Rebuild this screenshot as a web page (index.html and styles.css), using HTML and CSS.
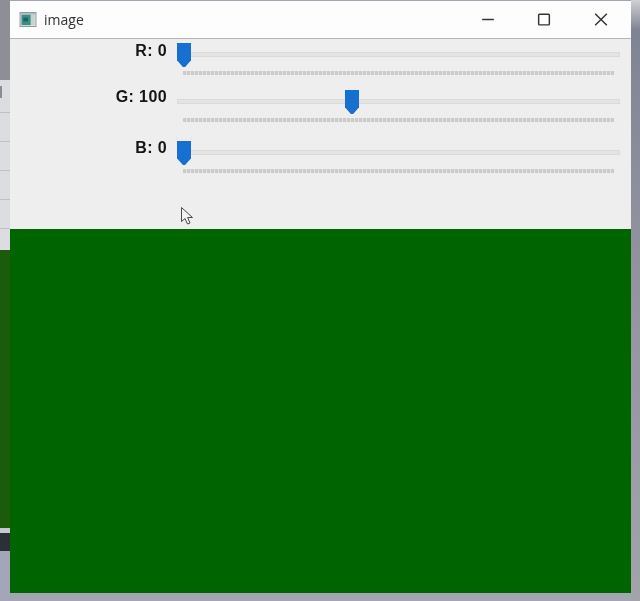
FILE: index.html
```html
<!DOCTYPE html>
<html lang="en">
<head>
<meta charset="utf-8">
<title>image</title>
<link rel="stylesheet" href="styles.css">
</head>
<body>
<div class="desktop">
  <div class="behind">
    <div class="b-top"></div>
    <div class="b-panel">
      <div class="b-mark"></div>
      <div class="b-line"></div>
      <div class="b-line"></div>
      <div class="b-line"></div>
      <div class="b-line"></div>
      <div class="b-line"></div>
    </div>
    <div class="b-green"></div>
    <div class="b-light"></div>
    <div class="b-dark"></div>
    <div class="b-bottom"></div>
  </div>
  <main class="window">
    <header class="titlebar">
      <svg class="app-icon" viewBox="0 0 18 16" aria-hidden="true">
        <rect x="0.5" y="0.5" width="17" height="15" fill="#dfe6e4" stroke="#8a9499"/>
        <rect x="1" y="1" width="16" height="2" fill="#aebcc6"/>
        <rect x="2" y="3" width="10" height="11" fill="#3a9080"/>
        <rect x="4" y="6" width="5" height="4" fill="#1f5f70"/>
        <rect x="12" y="3" width="4" height="11" fill="#c6d2cc"/>
      </svg>
      <span class="title">image</span>
      <div class="controls">
        <svg class="ctl" viewBox="0 0 56 38" aria-hidden="true"><path d="M22 19H34" /></svg>
        <svg class="ctl" viewBox="0 0 56 38" aria-hidden="true"><rect x="22.5" y="13.5" width="11" height="11" rx="1"/></svg>
        <svg class="ctl ctl-close" viewBox="0 0 56 38" aria-hidden="true"><path d="M22 13L34 25M34 13L22 25"/></svg>
      </div>
    </header>
    <section class="panel">
      <div class="row">
        <label class="label">R: 0</label>
        <div class="slider">
          <div class="track"></div>
          <div class="ticks"></div>
          <div class="thumb thumb-min"></div>
        </div>
      </div>
      <div class="row row-g">
        <label class="label">G: 100</label>
        <div class="slider">
          <div class="track"></div>
          <div class="ticks"></div>
          <div class="thumb thumb-g"></div>
        </div>
      </div>
      <div class="row row-b">
        <label class="label">B: 0</label>
        <div class="slider">
          <div class="track"></div>
          <div class="ticks"></div>
          <div class="thumb thumb-min"></div>
        </div>
      </div>
      <svg class="cursor" viewBox="0 0 14 20" aria-hidden="true">
        <path d="M1.5 1.5V15.5L5 12.5L7.5 18L10 17L7.6 11.5H12.5Z" fill="#f4f4f4" stroke="#4a4a4a" stroke-width="1"/>
      </svg>
    </section>
    <section class="canvas"></section>
  </main>
  <div class="right-edge"></div>
</div>
</body>
</html>
```
FILE: styles.css
```css
* { box-sizing: border-box; }
html, body { margin: 0; padding: 0; }
body { width: 640px; height: 601px; overflow: hidden; background: #a3a5b0; font-family: "Open Sans", "Noto Sans", sans-serif; }

.desktop { display: flex; width: 640px; height: 601px; }

.behind { width: 10px; flex: none; display: flex; flex-direction: column; }
.b-top { height: 80px; background: #8d8e96; }
.b-panel { height: 170px; background: #dcdde0; padding-top: 6px; display: flex; flex-direction: column; gap: 28px; }
.b-mark { width: 2px; height: 12px; background: #8a8c92; margin-bottom: -14px; }
.b-line { height: 1px; background: #bfc1c6; }
.b-green { height: 278px; background: #1c5a0c; }
.b-light { height: 5px; background: #c8c9ce; }
.b-dark { height: 18px; background: #2b3038; }
.b-bottom { flex: 1; background: #a2a6b8; }

.window { width: 621px; flex: none; margin-top: 1px; height: 592px; display: flex; flex-direction: column; background: #eeeeee; }

.titlebar { height: 38px; flex: none; display: flex; align-items: center; background: #fdfdfd; border-bottom: 1px solid #b4b4b4; padding-left: 9px; }
.app-icon { width: 18px; height: 15px; flex: none; }
.title { margin-left: 7px; font-size: 14px; color: #333; filter: blur(0.3px); }
.controls { margin-left: auto; display: flex; padding-right: 2px; }
.ctl { width: 56px; height: 37px; display: block; fill: none; stroke: #333; stroke-width: 1.5; }
.ctl-close { margin-left: 1px; }

.panel { height: 190px; flex: none; position: relative; padding-top: 4px; background: #eeeeee; }
.row { display: flex; height: 32px; }
.row-g { margin-top: 15px; }
.row-b { margin-top: 19px; }
.label { width: 157px; flex: none; margin-top: -2px; text-align: right; font: bold 16px/20px "Liberation Sans", Arial, sans-serif; letter-spacing: 0.4px; color: #141414; filter: blur(0.3px); }
.row-g .label { margin-top: -3px; }
.row-b .label { margin-top: -3px; }
.slider { position: relative; margin-left: 10px; width: 443px; height: 32px; }
.track { margin-top: 9px; height: 5px; background: #e4e4e4; border: 1px solid #dadada; }
.ticks { margin: 14px 6px 0; height: 4px; background: repeating-linear-gradient(90deg, #cbcbcb 0, #cbcbcb 3px, #e4e4e4 3px, #e4e4e4 4px); }
.thumb { position: absolute; top: 0; width: 14px; height: 24px; background: #1570d2; clip-path: polygon(0 0, 100% 0, 100% 72%, 58% 100%, 42% 100%, 0 72%); filter: blur(0.3px); }
.thumb-min { left: 0; }
.thumb-g { left: 168px; }

.cursor { position: absolute; left: 170px; top: 167px; width: 14px; height: 20px; }

.canvas { flex: 1; background: #006400; }

.right-edge { flex: 1; background: linear-gradient(180deg, #d0d0d4 0, #7f8494 30px, #8d909c 200px, #a3a3aa 100%); }
```
